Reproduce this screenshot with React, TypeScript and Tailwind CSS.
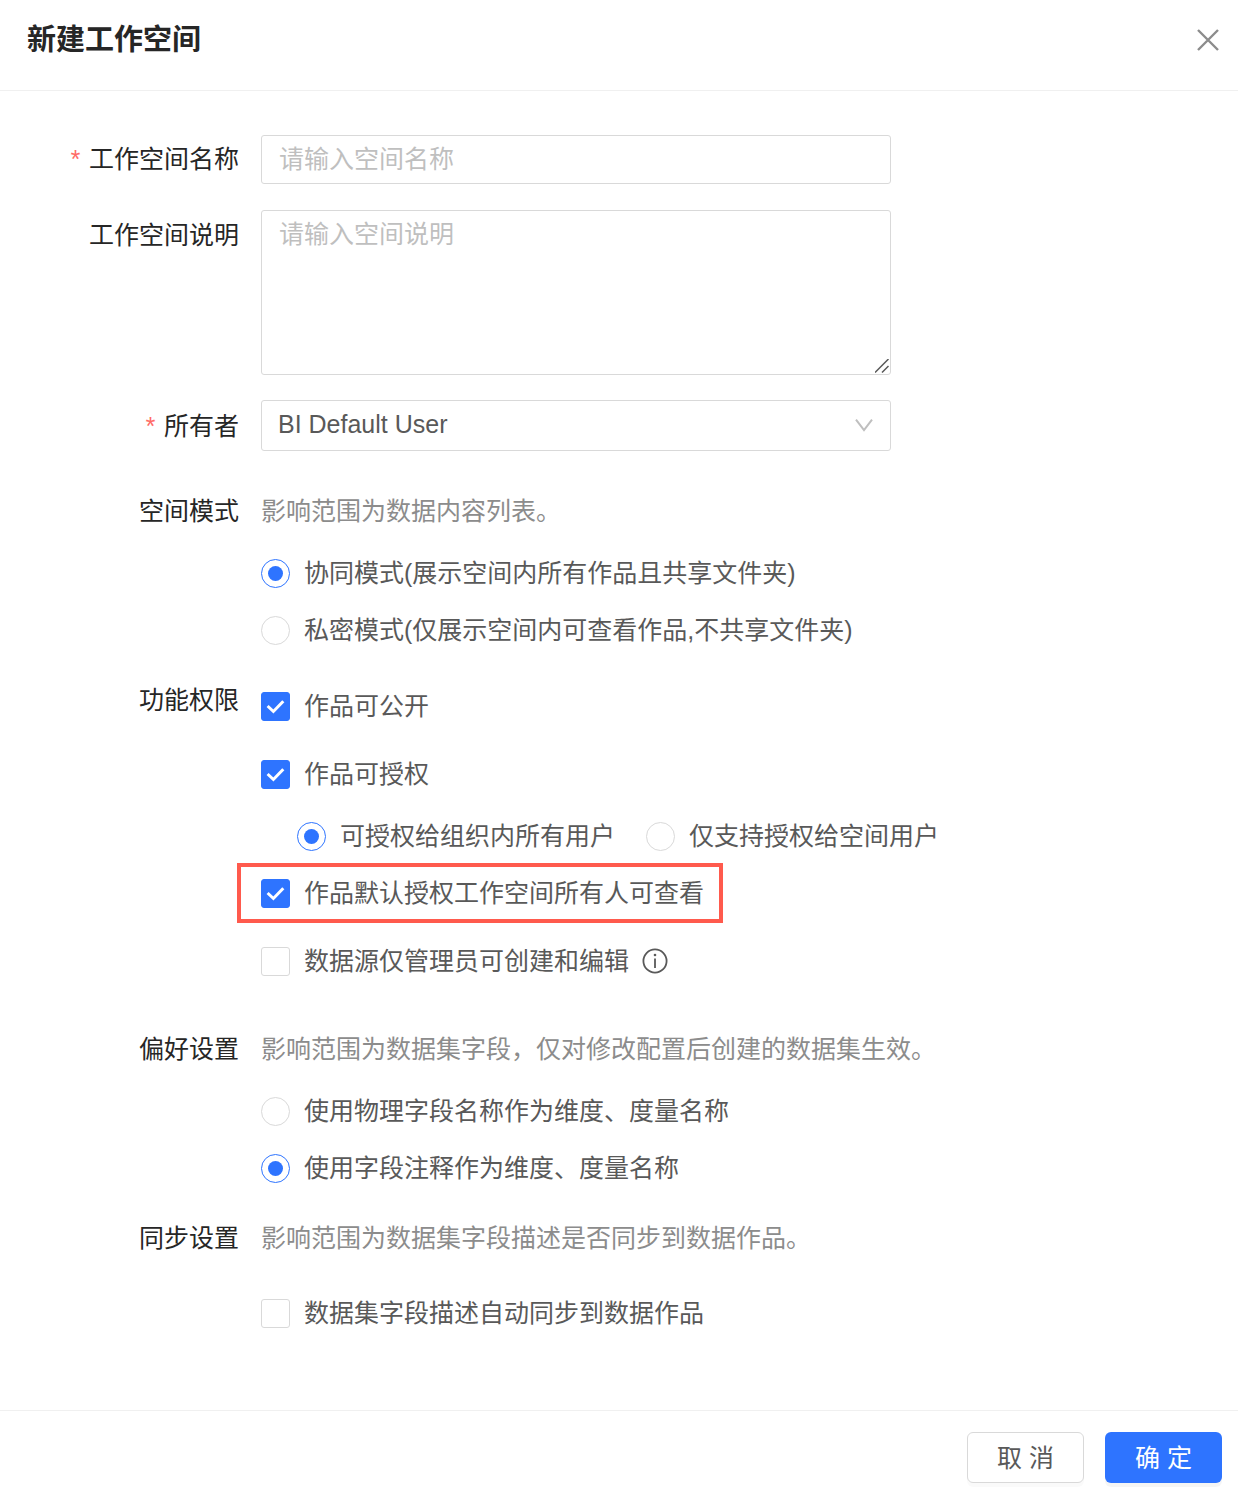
import { useState, type ReactNode } from 'react';

function Field({
  label,
  htmlFor,
  required,
  className = '',
  labelClass = '',
  children,
}: {
  label: string;
  htmlFor?: string;
  required?: boolean;
  className?: string;
  labelClass?: string;
  children: ReactNode;
}) {
  const text = (
    <>
      {required && (
        <span className="mr-[6px] pt-1 font-['Liberation_Mono',monospace] text-[#ff6b66]">*</span>
      )}
      <span>{label}</span>
    </>
  );
  return (
    <div className={`flex gap-[22px] ${className}`}>
      <div className={`flex w-[239px] shrink-0 items-start justify-end text-[#262626] ${labelClass}`}>
        {htmlFor ? (
          <label htmlFor={htmlFor} className="flex items-start">
            {text}
          </label>
        ) : (
          text
        )}
      </div>
      <div className="min-w-0 flex-1">{children}</div>
    </div>
  );
}

function Radio({
  name,
  label,
  checked,
  onChange,
  className = '',
}: {
  name: string;
  label: string;
  checked: boolean;
  onChange: () => void;
  className?: string;
}) {
  return (
    <label className={`flex w-fit items-center gap-[14px] ${className}`}>
      <span className="grid shrink-0 place-items-center">
        <input
          type="radio"
          name={name}
          checked={checked}
          onChange={onChange}
          className="peer col-start-1 row-start-1 size-[29px] appearance-none rounded-full border border-[#d9d9d9] bg-white checked:border-[#2e74ff]"
        />
        <span className="pointer-events-none col-start-1 row-start-1 size-[15px] rounded-full bg-[#2e74ff] opacity-0 peer-checked:opacity-100" />
      </span>
      {label}
    </label>
  );
}

function Checkbox({
  label,
  defaultChecked = false,
  className = '',
}: {
  label: string;
  defaultChecked?: boolean;
  className?: string;
}) {
  return (
    <label className={`flex w-fit items-center gap-[14px] ${className}`}>
      <span className="grid shrink-0 place-items-center">
        <input
          type="checkbox"
          defaultChecked={defaultChecked}
          className="peer col-start-1 row-start-1 size-[29px] appearance-none rounded-[3px] border border-[#d9d9d9] bg-white checked:border-[#2e74ff] checked:bg-[#2e74ff]"
        />
        <svg
          viewBox="0 0 29 29"
          className="pointer-events-none col-start-1 row-start-1 size-[29px] opacity-0 peer-checked:opacity-100"
          fill="none"
          stroke="#fff"
          strokeWidth="3"
        >
          <path d="M6.6 14 12.4 19.5 22.3 9.2" />
        </svg>
      </span>
      {label}
    </label>
  );
}

export default function App() {
  const [mode, setMode] = useState('shared');
  const [scope, setScope] = useState('org');
  const [naming, setNaming] = useState('comment');

  return (
    <div
      role="dialog"
      aria-labelledby="dialog-title"
      className="bg-white font-['Liberation_Sans','Noto_Sans_CJK_SC',sans-serif] text-[25px] leading-[38px] text-[#595959]"
    >
      <header className="flex h-[91px] items-start justify-between border-b border-[#f0f0f0] pt-[21px] pr-[19px] pl-[27px]">
        <h1 id="dialog-title" className="text-[29px] leading-[38px] font-bold text-[#262626]">
          新建工作空间
        </h1>
        <button type="button" aria-label="关闭" className="mt-2">
          <svg viewBox="0 0 22 22" className="size-[22px]" fill="none" stroke="#8c8c8c" strokeWidth="2.4">
            <path d="M1 1 21 21M21 1 1 21" />
          </svg>
        </button>
      </header>

      <form className="pt-11 pb-[78px]">
        <Field label="工作空间名称" htmlFor="name" required labelClass="pt-[5px]">
          <input
            id="name"
            placeholder="请输入空间名称"
            className="block h-[49px] w-full max-w-[630px] rounded-[3px] border border-[#d9d9d9] px-[17px] placeholder:text-[#bfbfbf]"
          />
        </Field>

        <Field label="工作空间说明" htmlFor="desc" className="mt-[26px]" labelClass="pt-[6px]">
          <div className="relative max-w-[630px]">
            <textarea
              id="desc"
              placeholder="请输入空间说明"
              className="block h-[165px] w-full resize-none rounded-[3px] border border-[#d9d9d9] px-[17px] py-1 placeholder:text-[#bfbfbf]"
            />
            <svg
              viewBox="0 0 14 14"
              className="pointer-events-none absolute right-[2px] bottom-[2px] size-[14px]"
              fill="none"
              stroke="#595959"
              strokeWidth="1.5"
            >
              <path d="M0 13.5 13.5 0M7 13.5 13.5 7" />
            </svg>
          </div>
        </Field>

        <Field label="所有者" htmlFor="owner" required className="mt-[25px]" labelClass="pt-[7px]">
          <div className="relative max-w-[630px]">
            <select
              id="owner"
              className="block h-[51px] w-full appearance-none rounded-[3px] border border-[#d9d9d9] bg-white px-4 pb-[3px]"
            >
              <option>BI Default User</option>
            </select>
            <svg
              viewBox="0 0 18 13"
              className="pointer-events-none absolute top-[19px] right-[18px] h-[13px] w-[18px]"
              fill="none"
              stroke="#bfbfbf"
              strokeWidth="2"
            >
              <path d="M1 .7 9 11.2 17 .7" />
            </svg>
          </div>
        </Field>

        <Field label="空间模式" className="mt-[41px]">
          <p className="text-[#8c8c8c]">影响范围为数据内容列表。</p>
          <Radio
            name="mode"
            label="协同模式(展示空间内所有作品且共享文件夹)"
            checked={mode === 'shared'}
            onChange={() => setMode('shared')}
            className="mt-6"
          />
          <Radio
            name="mode"
            label="私密模式(仅展示空间内可查看作品,不共享文件夹)"
            checked={mode === 'private'}
            onChange={() => setMode('private')}
            className="mt-[19px]"
          />
        </Field>

        <Field label="功能权限" className="mt-8">
          <Checkbox label="作品可公开" defaultChecked className="mt-[6px]" />
          <Checkbox label="作品可授权" defaultChecked className="mt-[30px]" />
          <div className="mt-6 ml-9 flex flex-wrap gap-x-[31px]">
            <Radio
              name="scope"
              label="可授权给组织内所有用户"
              checked={scope === 'org'}
              onChange={() => setScope('org')}
            />
            <Radio
              name="scope"
              label="仅支持授权给空间用户"
              checked={scope === 'space'}
              onChange={() => setScope('space')}
            />
          </div>
          <div className="mt-2 -ml-6 w-fit border-4 border-[#ff5a4d] py-[7px] pr-[15px] pl-5">
            <Checkbox label="作品默认授权工作空间所有人可查看" defaultChecked />
          </div>
          <div className="mt-[19px] flex items-center gap-[13px]">
            <Checkbox label="数据源仅管理员可创建和编辑" />
            <svg viewBox="0 0 26 26" className="size-[26px]" fill="none" stroke="#595959" strokeWidth="1.8">
              <circle cx="13" cy="13" r="11.6" />
              <path d="M13 10.5V20" />
              <circle cx="13" cy="7" r="1.3" fill="#595959" stroke="none" />
            </svg>
          </div>
        </Field>

        <Field label="偏好设置" className="mt-[50px]">
          <p className="text-[#8c8c8c]">影响范围为数据集字段，仅对修改配置后创建的数据集生效。</p>
          <Radio
            name="naming"
            label="使用物理字段名称作为维度、度量名称"
            checked={naming === 'physical'}
            onChange={() => setNaming('physical')}
            className="mt-6"
          />
          <Radio
            name="naming"
            label="使用字段注释作为维度、度量名称"
            checked={naming === 'comment'}
            onChange={() => setNaming('comment')}
            className="mt-[19px]"
          />
        </Field>

        <Field label="同步设置" className="mt-8">
          <p className="text-[#8c8c8c]">影响范围为数据集字段描述是否同步到数据作品。</p>
          <Checkbox label="数据集字段描述自动同步到数据作品" className="mt-[37px]" />
        </Field>
      </form>

      <footer className="flex justify-end gap-[21px] border-t border-[#f0f0f0] pt-[21px] pr-4 pb-[19px]">
        <button
          type="button"
          className="h-[51px] w-[117px] rounded-md border border-[#d9d9d9] bg-white shadow-[0_4px_0_rgba(0,0,0,0.02)]"
        >
          取 消
        </button>
        <button
          type="button"
          className="h-[51px] w-[117px] rounded-md bg-[#2e74ff] text-white shadow-[0_4px_0_rgba(0,0,0,0.04)]"
        >
          确 定
        </button>
      </footer>
    </div>
  );
}
